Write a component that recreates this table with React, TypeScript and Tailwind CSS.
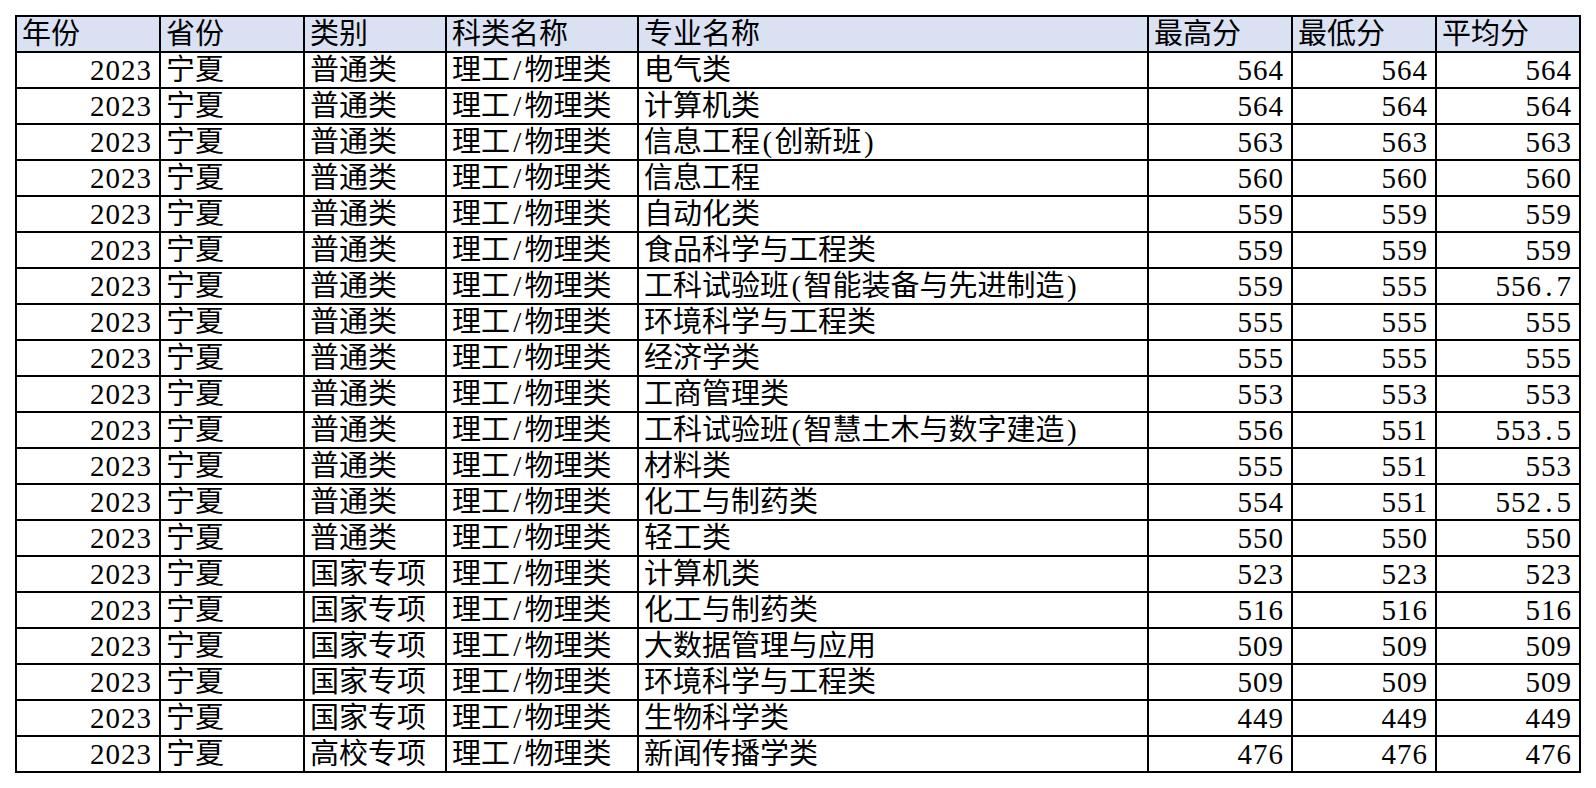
import React from 'react';

const rows: [string, string, string, string, string][] = [
  ['普通类', '电气类', '564', '564', '564'],
  ['普通类', '计算机类', '564', '564', '564'],
  ['普通类', '信息工程(创新班)', '563', '563', '563'],
  ['普通类', '信息工程', '560', '560', '560'],
  ['普通类', '自动化类', '559', '559', '559'],
  ['普通类', '食品科学与工程类', '559', '559', '559'],
  ['普通类', '工科试验班(智能装备与先进制造)', '559', '555', '556.7'],
  ['普通类', '环境科学与工程类', '555', '555', '555'],
  ['普通类', '经济学类', '555', '555', '555'],
  ['普通类', '工商管理类', '553', '553', '553'],
  ['普通类', '工科试验班(智慧土木与数字建造)', '556', '551', '553.5'],
  ['普通类', '材料类', '555', '551', '553'],
  ['普通类', '化工与制药类', '554', '551', '552.5'],
  ['普通类', '轻工类', '550', '550', '550'],
  ['国家专项', '计算机类', '523', '523', '523'],
  ['国家专项', '化工与制药类', '516', '516', '516'],
  ['国家专项', '大数据管理与应用', '509', '509', '509'],
  ['国家专项', '环境科学与工程类', '509', '509', '509'],
  ['国家专项', '生物科学类', '449', '449', '449'],
  ['高校专项', '新闻传播学类', '476', '476', '476'],
];

const headers = ['年份', '省份', '类别', '科类名称', '专业名称', '最高分', '最低分', '平均分'];
const widths = [144, 144, 142, 192, 510, 144, 144, 144];

// half-width punctuation as in the sheet font (each takes half an em)
function Text({ s }: { s: string }) {
  const parts = s.split(/([/().])/);
  return (
    <>
      {parts.map((p, i) =>
        /^[/().]$/.test(p) ? (
          <span key={i} className="inline-block w-[0.5em] text-center">
            {p}
          </span>
        ) : (
          <React.Fragment key={i}>{p}</React.Fragment>
        )
      )}
    </>
  );
}

export default function App() {
  const cell = 'border-2 border-black h-[36px] p-0 align-bottom whitespace-nowrap overflow-hidden';
  const txt = 'pl-[5px] leading-[34px]';
  const num = 'pr-[7px] text-right leading-[34px] tracking-[1px]';

  return (
    <div className="w-[1596px] h-[788px] bg-white pt-[15px] pl-[15px] font-['Liberation_Serif','Noto_Sans_CJK_SC',serif] text-[29px] text-black">
      <table className="border-collapse table-fixed w-[1566px]">
        <colgroup>
          {widths.map((w, i) => (
            <col key={i} style={{ width: w }} />
          ))}
        </colgroup>
        <thead>
          <tr className="bg-[#d9e1f2]">
            {headers.map((h) => (
              <th key={h} className={`${cell} ${txt} font-normal text-left`}>
                {h}
              </th>
            ))}
          </tr>
        </thead>
        <tbody>
          {rows.map((r, i) => (
            <tr key={i}>
              <td className={`${cell} ${num}`}>2023</td>
              <td className={`${cell} ${txt}`}>宁夏</td>
              <td className={`${cell} ${txt}`}>{r[0]}</td>
              <td className={`${cell} ${txt}`}>
                <Text s="理工/物理类" />
              </td>
              <td className={`${cell} ${txt}`}>
                <Text s={r[1]} />
              </td>
              <td className={`${cell} ${num}`}>{r[2]}</td>
              <td className={`${cell} ${num}`}>{r[3]}</td>
              <td className={`${cell} ${num}`}>
                <Text s={r[4]} />
              </td>
            </tr>
          ))}
        </tbody>
      </table>
    </div>
  );
}
